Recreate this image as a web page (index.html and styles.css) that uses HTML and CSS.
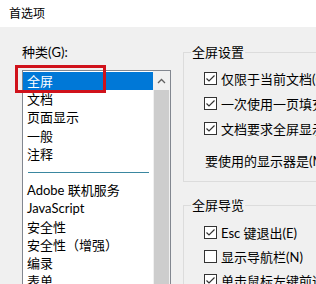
FILE: index.html
```html
<!DOCTYPE html>
<html lang="zh-CN">
<head>
    <meta charset="UTF-8">
    <title>首选项</title>
    <link rel="stylesheet" href="styles.css">
</head>
<body>
    <div class="titlebar">首选项</div>
    <div class="dialog">
        <div class="categories">
            <div class="field-label">种类(G):</div>
            <div class="listbox">
                <ul class="list">
                    <li class="selected">全屏</li>
                    <li>文档</li>
                    <li>页面显示</li>
                    <li>一般</li>
                    <li>注释</li>
                    <li class="separator"></li>
                    <li>Adobe 联机服务</li>
                    <li>JavaScript</li>
                    <li>安全性</li>
                    <li>安全性（增强）</li>
                    <li>编录</li>
                    <li>表单</li>
                    <li>辅助工具</li>
                </ul>
                <div class="scrollbar">
                    <div class="scroll-btn">
                        <svg width="9" height="6" viewBox="0 0 9 6"><polyline points="1,5 4.5,1.5 8,5" fill="none" stroke="#606060" stroke-width="1.3"/></svg>
                    </div>
                    <div class="scroll-thumb"></div>
                </div>
            </div>
        </div>
        <div class="settings">
            <fieldset class="group">
                <legend>全屏设置</legend>
                <label class="check-row"><span class="box checked"></span>仅限于当前文档(C)</label>
                <label class="check-row"><span class="box checked"></span>一次使用一页填充屏幕(F)</label>
                <label class="check-row"><span class="box checked"></span>文档要求全屏显示时提醒(A)</label>
                <div class="monitor-label">要使用的显示器是(M):</div>
            </fieldset>
            <fieldset class="group group-nav">
                <legend>全屏导览</legend>
                <label class="check-row"><span class="box checked"></span>Esc 键退出(E)</label>
                <label class="check-row"><span class="box"></span>显示导航栏(N)</label>
                <label class="check-row"><span class="box checked"></span>单击鼠标左键前进一页(L)</label>
            </fieldset>
        </div>
    </div>
    <div class="highlight"></div>
</body>
</html>
```

FILE: styles.css
```css
body {
    margin: 0;
    width: 316px;
    height: 284px;
    overflow: hidden;
    position: relative;
    background-color: #f0f0f0;
    color: #000;
    font-family: Lato, "Noto Sans CJK SC", sans-serif;
    font-size: 13px;
}
.titlebar {
    height: 27px;
    line-height: 27px;
    padding-left: 9px;
    background: #fff;
    font-size: 12px;
}
.dialog {
    display: flex;
    width: 420px;
    padding: 16px 0 0 22px;
}
.categories {
    flex: none;
    width: 149px;
}
.field-label {
    height: 18px;
    line-height: 18px;
    margin-bottom: 9px;
    white-space: nowrap;
}
.listbox {
    display: flex;
    box-sizing: border-box;
    width: 149px;
    height: 240px;
    border: 1px solid #828790;
    background: #fff;
}
.list {
    flex: 1;
    margin: 0;
    padding: 1px 0 0;
    list-style: none;
}
.list li {
    height: 18.2px;
    line-height: 18.2px;
    padding-left: 4px;
    white-space: nowrap;
}
.list .selected {
    background-color: #0078d7;
    color: #fff;
}
.list .separator {
    display: flex;
    align-items: center;
    padding: 0 4px 0 5px;
}
.list .separator::after {
    content: "";
    flex: 1;
    height: 1px;
    background: #3a87a0;
}
.scrollbar {
    display: flex;
    flex-direction: column;
    width: 17px;
    background: #f0f0f0;
}
.scroll-btn {
    height: 19px;
    display: flex;
    align-items: center;
    justify-content: center;
}
.scroll-thumb {
    flex: 1;
    margin: 0 1px;
    background: #cdcdcd;
}
.settings {
    margin-left: 12px;
    width: 230px;
}
.group {
    margin: 0;
    padding: 5px 0 7px 7px;
    min-width: 0;
    border: 1px solid #dcdcdc;
}
.group legend {
    padding: 0 1px;
    line-height: 18px;
}
.group-nav {
    margin-top: 14px;
    padding-top: 6px;
}
.check-row {
    display: flex;
    align-items: center;
    height: 25px;
    margin-left: 13px;
    white-space: nowrap;
}
.group-nav .check-row {
    height: 24px;
}
.box {
    flex: none;
    box-sizing: border-box;
    width: 13px;
    height: 13px;
    margin-right: 4px;
    border: 1px solid #333;
    background: #fff;
}
.box.checked {
    background: #fff url("data:image/svg+xml;utf8,<svg xmlns='http://www.w3.org/2000/svg' width='11' height='11'><polyline points='1.5,5.5 4,8 9.5,2.5' fill='none' stroke='%23333' stroke-width='1.2'/></svg>") no-repeat center;
}
.monitor-label {
    height: 25px;
    line-height: 25px;
    margin: 8px 0 0 14px;
    white-space: nowrap;
}
.highlight {
    position: absolute;
    left: 15px;
    top: 65px;
    box-sizing: border-box;
    width: 91px;
    height: 28px;
    border: 3px solid #d0121b;
}
```
